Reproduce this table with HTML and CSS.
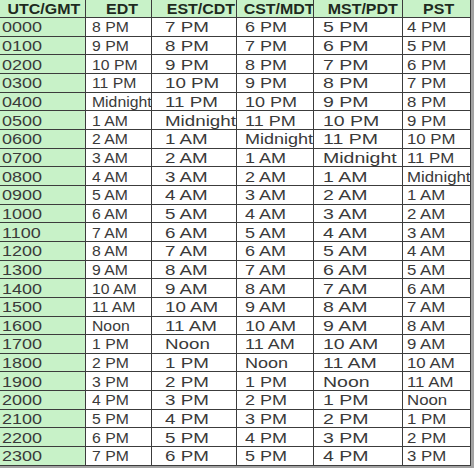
FILE: index.html
```html
<!DOCTYPE html>
<html>
<head>
<meta charset="utf-8">
<link rel="stylesheet" href="styles.css">
</head>
<body>
<div class="tz">
  <div class="h c1"><span>UTC/GMT</span></div><div class="h c2"><span>EDT</span></div><div class="h c3"><span>EST/CDT</span></div><div class="h c4"><span>CST/MDT</span></div><div class="h c5"><span>MST/PDT</span></div><div class="h c6"><span>PST</span></div>
  <div class="u c1"><span>0000</span></div><div class="c2"><span>8 PM</span></div><div class="c3"><span>7 PM</span></div><div class="c4"><span>6 PM</span></div><div class="c5"><span>5 PM</span></div><div class="c6"><span>4 PM</span></div>
  <div class="u c1"><span>0100</span></div><div class="c2"><span>9 PM</span></div><div class="c3"><span>8 PM</span></div><div class="c4"><span>7 PM</span></div><div class="c5"><span>6 PM</span></div><div class="c6"><span>5 PM</span></div>
  <div class="u c1"><span>0200</span></div><div class="c2"><span>10 PM</span></div><div class="c3"><span>9 PM</span></div><div class="c4"><span>8 PM</span></div><div class="c5"><span>7 PM</span></div><div class="c6"><span>6 PM</span></div>
  <div class="u c1"><span>0300</span></div><div class="c2"><span>11 PM</span></div><div class="c3"><span>10 PM</span></div><div class="c4"><span>9 PM</span></div><div class="c5"><span>8 PM</span></div><div class="c6"><span>7 PM</span></div>
  <div class="u c1"><span>0400</span></div><div class="c2"><span>Midnight</span></div><div class="c3"><span>11 PM</span></div><div class="c4"><span>10 PM</span></div><div class="c5"><span>9 PM</span></div><div class="c6"><span>8 PM</span></div>
  <div class="u c1"><span>0500</span></div><div class="c2"><span>1 AM</span></div><div class="c3"><span>Midnight</span></div><div class="c4"><span>11 PM</span></div><div class="c5"><span>10 PM</span></div><div class="c6"><span>9 PM</span></div>
  <div class="u c1"><span>0600</span></div><div class="c2"><span>2 AM</span></div><div class="c3"><span>1 AM</span></div><div class="c4"><span>Midnight</span></div><div class="c5"><span>11 PM</span></div><div class="c6"><span>10 PM</span></div>
  <div class="u c1"><span>0700</span></div><div class="c2"><span>3 AM</span></div><div class="c3"><span>2 AM</span></div><div class="c4"><span>1 AM</span></div><div class="c5"><span>Midnight</span></div><div class="c6"><span>11 PM</span></div>
  <div class="u c1"><span>0800</span></div><div class="c2"><span>4 AM</span></div><div class="c3"><span>3 AM</span></div><div class="c4"><span>2 AM</span></div><div class="c5"><span>1 AM</span></div><div class="c6"><span>Midnight</span></div>
  <div class="u c1"><span>0900</span></div><div class="c2"><span>5 AM</span></div><div class="c3"><span>4 AM</span></div><div class="c4"><span>3 AM</span></div><div class="c5"><span>2 AM</span></div><div class="c6"><span>1 AM</span></div>
  <div class="u c1"><span>1000</span></div><div class="c2"><span>6 AM</span></div><div class="c3"><span>5 AM</span></div><div class="c4"><span>4 AM</span></div><div class="c5"><span>3 AM</span></div><div class="c6"><span>2 AM</span></div>
  <div class="u c1"><span>1100</span></div><div class="c2"><span>7 AM</span></div><div class="c3"><span>6 AM</span></div><div class="c4"><span>5 AM</span></div><div class="c5"><span>4 AM</span></div><div class="c6"><span>3 AM</span></div>
  <div class="u c1"><span>1200</span></div><div class="c2"><span>8 AM</span></div><div class="c3"><span>7 AM</span></div><div class="c4"><span>6 AM</span></div><div class="c5"><span>5 AM</span></div><div class="c6"><span>4 AM</span></div>
  <div class="u c1"><span>1300</span></div><div class="c2"><span>9 AM</span></div><div class="c3"><span>8 AM</span></div><div class="c4"><span>7 AM</span></div><div class="c5"><span>6 AM</span></div><div class="c6"><span>5 AM</span></div>
  <div class="u c1"><span>1400</span></div><div class="c2"><span>10 AM</span></div><div class="c3"><span>9 AM</span></div><div class="c4"><span>8 AM</span></div><div class="c5"><span>7 AM</span></div><div class="c6"><span>6 AM</span></div>
  <div class="u c1"><span>1500</span></div><div class="c2"><span>11 AM</span></div><div class="c3"><span>10 AM</span></div><div class="c4"><span>9 AM</span></div><div class="c5"><span>8 AM</span></div><div class="c6"><span>7 AM</span></div>
  <div class="u c1"><span>1600</span></div><div class="c2"><span>Noon</span></div><div class="c3"><span>11 AM</span></div><div class="c4"><span>10 AM</span></div><div class="c5"><span>9 AM</span></div><div class="c6"><span>8 AM</span></div>
  <div class="u c1"><span>1700</span></div><div class="c2"><span>1 PM</span></div><div class="c3"><span>Noon</span></div><div class="c4"><span>11 AM</span></div><div class="c5"><span>10 AM</span></div><div class="c6"><span>9 AM</span></div>
  <div class="u c1"><span>1800</span></div><div class="c2"><span>2 PM</span></div><div class="c3"><span>1 PM</span></div><div class="c4"><span>Noon</span></div><div class="c5"><span>11 AM</span></div><div class="c6"><span>10 AM</span></div>
  <div class="u c1"><span>1900</span></div><div class="c2"><span>3 PM</span></div><div class="c3"><span>2 PM</span></div><div class="c4"><span>1 PM</span></div><div class="c5"><span>Noon</span></div><div class="c6"><span>11 AM</span></div>
  <div class="u c1"><span>2000</span></div><div class="c2"><span>4 PM</span></div><div class="c3"><span>3 PM</span></div><div class="c4"><span>2 PM</span></div><div class="c5"><span>1 PM</span></div><div class="c6"><span>Noon</span></div>
  <div class="u c1"><span>2100</span></div><div class="c2"><span>5 PM</span></div><div class="c3"><span>4 PM</span></div><div class="c4"><span>3 PM</span></div><div class="c5"><span>2 PM</span></div><div class="c6"><span>1 PM</span></div>
  <div class="u c1"><span>2200</span></div><div class="c2"><span>6 PM</span></div><div class="c3"><span>5 PM</span></div><div class="c4"><span>4 PM</span></div><div class="c5"><span>3 PM</span></div><div class="c6"><span>2 PM</span></div>
  <div class="u c1"><span>2300</span></div><div class="c2"><span>7 PM</span></div><div class="c3"><span>6 PM</span></div><div class="c4"><span>5 PM</span></div><div class="c5"><span>4 PM</span></div><div class="c6"><span>3 PM</span></div>
</div>
</body>
</html>
```
FILE: styles.css
```css
html, body {
  margin: 0;
  padding: 0;
  background: #a3a3a3;
  width: 474px;
  height: 468px;
  overflow: hidden;
}
.tz {
  display: grid;
  grid-template-columns: 85px 65px 84px 76px 88px 67px;
  grid-template-rows: 17px repeat(24, 17.67px);
  gap: 1px;
  padding: 0 1px 1px 0;
  width: 471px;
  box-sizing: border-box;
  background: #3c3c3c;
  font-family: "Liberation Sans", Arial, sans-serif;
  font-size: 15px;
  color: #3a3a3a;
}
.tz > div {
  background: #ffffff;
  display: flex;
  align-items: center;
  overflow: hidden;
  white-space: nowrap;
  line-height: 1;
}
.tz > div > span {
  display: inline-block;
  transform-origin: left center;
}
.tz > .h {
  background: #c8f2c8;
  justify-content: center;
  font-weight: bold;
  color: #1e2a1e;
  font-size: 14px;
}
.tz > .h > span {
  transform-origin: center center;
  transform: scaleX(1.14);
}
.tz > .u {
  background: #c8f2c8;
}
.c1 { padding-left: 2px; }
.c1 > span { transform: scaleX(1.2); }
.c2 { padding-left: 6px; }
.c2 > span { transform: scaleX(1.05); }
.c3 { padding-left: 13px; }
.c3 > span { transform: scaleX(1.25); }
.c4 { padding-left: 8px; }
.c4 > span { transform: scaleX(1.2); }
.c5 { padding-left: 9px; }
.c5 > span { transform: scaleX(1.3); }
.c6 { padding-left: 4px; }
.c6 > span { transform: scaleX(1.12); }
```
